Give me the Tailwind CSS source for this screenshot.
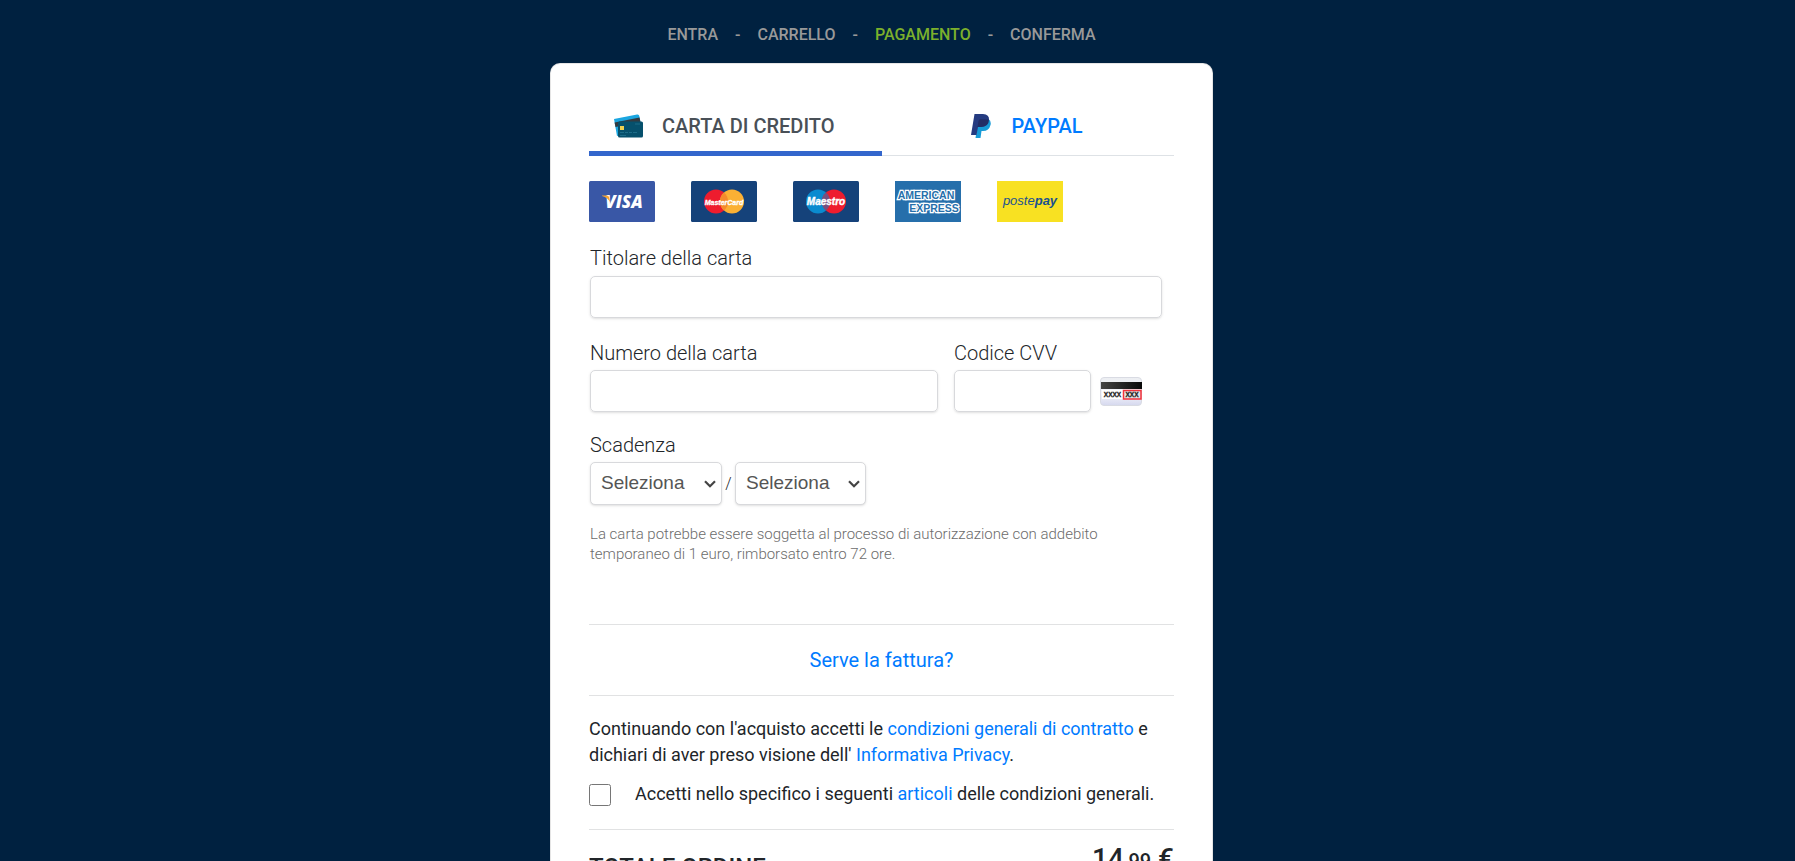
<!DOCTYPE html>
<html lang="it">
<head>
  <meta charset="UTF-8" />
  <meta name="viewport" content="width=device-width, initial-scale=1.0"/>
  <title>Pagamento</title>
  <script src="https://cdn.jsdelivr.net/npm/@tailwindcss/browser@4"></script>
</head>
<body class="bg-[#002140] min-h-screen font-['Roboto',sans-serif] text-[#212529] pr-8 overflow-x-hidden">

  <!-- Steps -->
  <nav class="flex justify-center gap-[17px] pt-[23px] pb-4 text-base leading-6 font-medium text-[#999999]">
    <a href="#">ENTRA</a>
    <span>-</span>
    <a href="#">CARRELLO</a>
    <span>-</span>
    <a href="#" class="text-[#7cb02c]">PAGAMENTO</a>
    <span>-</span>
    <a href="#">CONFERMA</a>
  </nav>

  <!-- Payment card -->
  <main class="max-w-[663px] mx-auto bg-white rounded-[10px] border border-black/10 p-[38px]">

    <!-- Payment method tabs -->
    <div class="grid grid-cols-2 text-xl leading-6 font-medium">
      <button type="button" class="flex items-center h-[54px] pl-[25px] pb-0.5 gap-[19px] border-b-5 border-[#3366cc] text-[#495057]">
        <svg class="w-[29px] h-6" viewBox="0 0 29 24">
          <path d="M0 5 L23 0.5 Q25 0 25.300 2 L28 16 L3 22 Z" fill="#1ba6e0"/>
          <path d="M0.600 8.500 L25.500 3.500 L26.500 8 L1.500 13 Z" fill="#333a40"/>
          <rect x="4" y="7.500" width="25" height="16" rx="1.500" fill="#06506c"/>
          <rect x="6" y="12" width="4" height="4" fill="#f0d050"/>
          <path d="M21 10h5M6 18.500h4M11 18.500h3M15 18.500h3M19 18.500h4M6 21.500h6" stroke="#1d6c88" stroke-width="1"/>
        </svg>
        CARTA DI CREDITO
      </button>
      <button type="button" class="flex items-center h-[54px] pl-[89px] pb-1.5 gap-[21px] border-b border-[#dee2e6] text-[#007bff]">
        <svg class="w-5 h-6" viewBox="0 0 20 24">
          <path d="M17.500 5 Q20.500 7 19.500 11 Q18 17 12 17 L10.500 17 L9.500 24 L4.500 24 L6.500 11 Z" fill="#179bd7"/>
          <path d="M3.500 0 H12 Q18.500 0.500 18 6 Q17 13 10 13 H7 L5.500 21 H0 Z" fill="#253b80"/>
          <path d="M17.700 5.500 Q18 12.500 10 13 H6.500 L7.500 7 Q7.800 5.500 9.500 5.300 Z" fill="#222d65"/>
        </svg>
        PAYPAL
      </button>
    </div>

    <!-- Accepted cards -->
    <div class="flex gap-9 mt-[25px] h-[41px]">
      <svg class="w-[66px] h-[41px]" viewBox="0 0 66 41" role="img" aria-label="Visa">
        <rect width="66" height="41" rx="1.500" fill="#3957a6"/>
        <text x="35" y="27" text-anchor="middle" font-family="Open Sans" font-size="17" font-weight="800" font-style="italic" fill="#fff">VISA</text>
        <path d="M13 14.500 h5 q1.500 0 2 1.500 l1.500 6 q-2.500-5.500-8.500-7z" fill="#f7a531"/>
      </svg>
      <svg class="w-[66px] h-[41px]" viewBox="0 0 66 41" role="img" aria-label="MasterCard">
        <rect width="66" height="41" rx="1.500" fill="#15427a"/>
        <circle cx="25" cy="20.500" r="12" fill="#ee1c2e"/>
        <circle cx="41" cy="20.500" r="12" fill="#fbb034"/>
        <path d="M33 11.500a12 12 0 0 1 0 18a12 12 0 0 1 0-18z" fill="#f58a2c"/>
        <text x="33" y="23.500" text-anchor="middle" font-family="Liberation Sans" font-size="7" font-weight="700" font-style="italic" fill="#fff" stroke="#fff" stroke-width="0.300">MasterCard</text>
      </svg>
      <svg class="w-[66px] h-[41px]" viewBox="0 0 66 41" role="img" aria-label="Maestro">
        <rect width="66" height="41" rx="1.500" fill="#15427a"/>
        <circle cx="25" cy="20.500" r="12" fill="#0a8bd0"/>
        <circle cx="41" cy="20.500" r="12" fill="#ee1c2e"/>
        <path d="M33 11.500a12 12 0 0 1 0 18a12 12 0 0 1 0-18z" fill="#76507f"/>
        <text x="33" y="24" text-anchor="middle" font-family="Liberation Sans" font-size="10" font-weight="700" font-style="italic" fill="#fff" stroke="#fff" stroke-width="0.400">Maestro</text>
      </svg>
      <svg class="w-[66px] h-[41px]" viewBox="0 0 66 41" role="img" aria-label="American Express">
        <rect width="66" height="41" fill="#266fab"/>
        <g font-family="Liberation Sans" font-size="10.500" font-weight="700" fill="#266fab" stroke="#fff" stroke-width="2.500" paint-order="stroke" text-anchor="middle">
          <text x="31" y="18">AMERICAN</text>
          <text x="39" y="31">EXPRESS</text>
        </g>
      </svg>
      <svg class="w-[66px] h-[41px]" viewBox="0 0 66 41" role="img" aria-label="Postepay">
        <rect width="66" height="41" fill="#f8e122"/>
        <text x="33" y="24" text-anchor="middle" font-family="Liberation Sans" font-size="13" font-style="italic" fill="#1b5190">poste<tspan font-weight="700">pay</tspan></text>
      </svg>
    </div>

    <!-- Card form -->
    <form class="pl-px pr-3">
      <div class="mt-[21px]">
        <label for="holder" class="block mb-[3px] text-xl leading-[30px] font-light">Titolare della carta</label>
        <input id="holder" type="text" class="block w-full h-[42px] px-2.5 border border-[#d8d9dc] rounded-[5px] shadow-sm" />
      </div>

      <div class="flex mt-5">
        <div class="flex-1">
          <label for="number" class="block mb-0.5 text-xl leading-[30px] font-light">Numero della carta</label>
          <input id="number" type="text" class="block w-full h-[42px] px-2.5 border border-[#d8d9dc] rounded-[5px] shadow-sm" />
        </div>
        <div class="w-[137px] ml-4">
          <label for="cvv" class="block mb-0.5 text-xl leading-[30px] font-light">Codice CVV</label>
          <input id="cvv" type="text" class="block w-full h-[42px] px-2.5 border border-[#d8d9dc] rounded-[5px] shadow-sm" />
        </div>
        <div class="flex items-center self-end h-[42px] ml-[9px] mr-5">
          <svg class="w-[42px] h-[29px]" viewBox="0 0 42 29" role="img" aria-label="Codice sul retro della carta">
            <defs>
              <linearGradient id="back" x2="0" y2="1"><stop stop-color="#eceef2"/><stop offset="0.600" stop-color="#f4f4fb"/><stop offset="1" stop-color="#d5d8ee"/></linearGradient>
              <linearGradient id="stripe"><stop stop-color="#444"/><stop offset="1" stop-color="#080808"/></linearGradient>
            </defs>
            <rect x="0.500" y="0.500" width="41" height="28" rx="3.500" fill="url(#back)" stroke="#d9dbe3"/>
            <rect x="1" y="5" width="41" height="7" fill="url(#stripe)"/>
            <rect x="2" y="13" width="39" height="9" fill="#fff"/>
            <rect x="23.500" y="13.500" width="17.500" height="8.500" fill="#e4e4e4" stroke="#f2323c" stroke-width="1.500"/>
            <g font-family="Liberation Sans" font-size="6.500" font-weight="700" fill="#222" stroke="#222" stroke-width="0.300" text-anchor="middle">
              <text x="12.500" y="20">XXXX</text>
              <text x="32" y="20">XXX</text>
            </g>
          </svg>
        </div>
      </div>

      <div class="mt-[18px]">
        <label for="month" class="block mb-0.5 text-xl leading-[30px] font-light">Scadenza</label>
        <div class="flex items-center">
          <div class="relative w-[132px]">
            <select id="month" class="block appearance-none w-full h-[43px] pl-2.5 pr-6 bg-white border border-[#d8d9dc] rounded-[5px] shadow-sm font-['Liberation_Sans',sans-serif] text-[19px] text-[#555555]">
              <option>Seleziona</option>
            </select>
            <svg class="absolute right-1.5 top-[18px] w-3 h-2 pointer-events-none" viewBox="0 0 12 8" fill="none" stroke="#444" stroke-width="2.200"><path d="M1 1.200 L6 6.200 L11 1.200"/></svg>
          </div>
          <span class="w-[13px] text-center text-base font-light">/</span>
          <div class="relative w-[131px]">
            <select aria-label="Anno di scadenza" class="block appearance-none w-full h-[43px] pl-2.5 pr-6 bg-white border border-[#d8d9dc] rounded-[5px] shadow-sm font-['Liberation_Sans',sans-serif] text-[19px] text-[#555555]">
              <option>Seleziona</option>
            </select>
            <svg class="absolute right-1.5 top-[18px] w-3 h-2 pointer-events-none" viewBox="0 0 12 8" fill="none" stroke="#444" stroke-width="2.200"><path d="M1 1.200 L6 6.200 L11 1.200"/></svg>
          </div>
        </div>
      </div>

      <p class="mt-[19px] max-w-[520px] text-[15px] leading-5 font-light text-[#6c6c6c]">La carta potrebbe essere soggetta al processo di autorizzazione con addebito temporaneo di 1 euro, rimborsato entro 72 ore.</p>
    </form>

    <!-- Invoice -->
    <div class="mt-[60px] py-5 border-y border-[#e1e2e3] text-center text-xl leading-[30px]">
      <a href="#" class="text-[#007bff]">Serve la fattura?</a>
    </div>

    <!-- Terms -->
    <p class="mt-5 text-lg leading-[26px]">Continuando con l'acquisto accetti le <a href="#" class="text-[#007bff]">condizioni generali di contratto</a> e dichiari di aver preso visione dell' <a href="#" class="text-[#007bff]">Informativa Privacy</a>.</p>
    <div class="flex mt-[13px] pb-[22px] border-b border-[#e1e2e3] text-lg leading-[26px]">
      <input id="terms" type="checkbox" class="w-[22px] h-[22px] mt-[3px] mr-6" />
      <label for="terms">Accetti nello specifico i seguenti <a href="#" class="text-[#007bff]">articoli</a> delle condizioni generali.</label>
    </div>

    <!-- Order total -->
    <div class="flex justify-between items-start pt-3.5 font-medium">
      <span class="pt-2 text-2xl leading-[30px]">TOTALE ORDINE</span>
      <span class="text-[28px] leading-[30px]">14<span class="text-xl">,99</span> €</span>
    </div>
  </main>
</body>
</html>
